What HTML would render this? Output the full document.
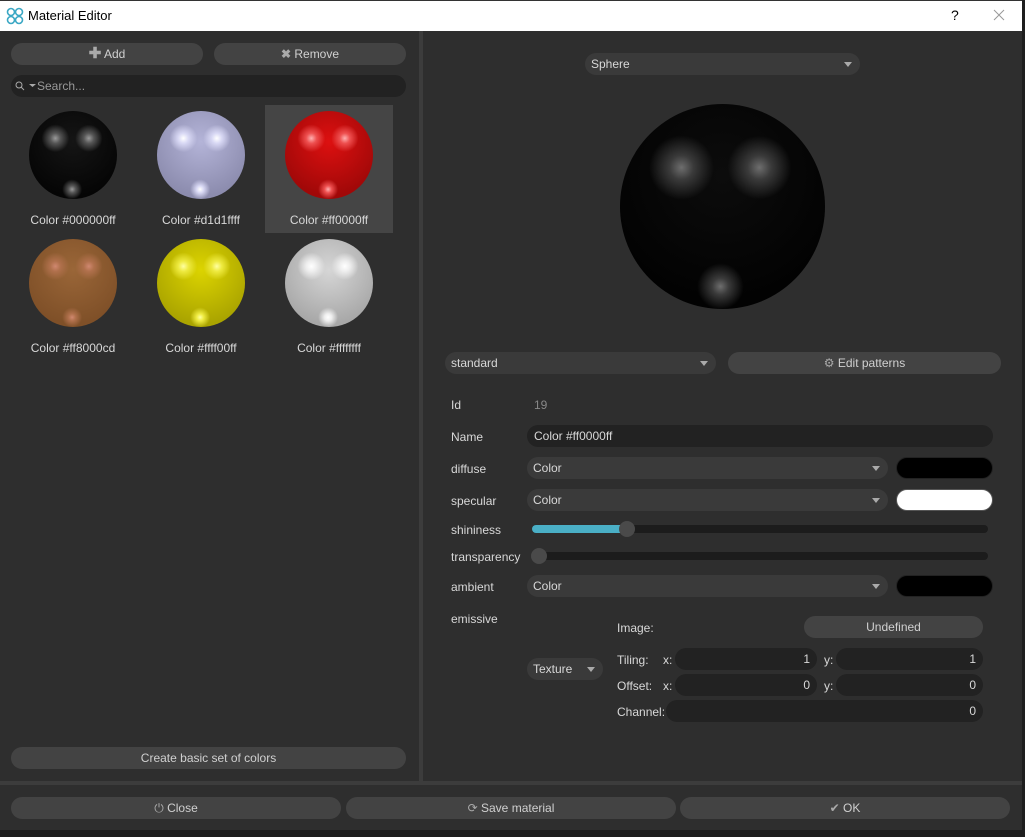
<!DOCTYPE html>
<html><head><meta charset="utf-8"><style>
*{box-sizing:border-box;margin:0;padding:0}
body{width:1025px;height:837px;overflow:hidden;background:#2e2e2e;font-family:"Liberation Sans",sans-serif;font-size:12px;color:#d8d8d8;position:relative}
.a{position:absolute}
.btn{position:absolute;background:#434343;border-radius:11px;height:22px;line-height:22px;text-align:center;color:#d0d0d0}
.fld{position:absolute;background:#222;border-radius:11px;height:22px;line-height:22px;color:#d8d8d8;padding:0 7px}
.cmb{position:absolute;background:#3a3a3a;border-radius:11px;height:22px;line-height:22px;padding-left:6px;color:#d8d8d8}
.cmb:after{content:"";position:absolute;right:8px;top:9px;border:4px solid transparent;border-top:5px solid #aaa;border-bottom:0}
.sph{position:absolute;border-radius:50%;background:
radial-gradient(circle at 30% 31%,var(--h) 0,var(--hm) 6%,transparent 16%),
radial-gradient(circle at 68% 31%,var(--h) 0,var(--hm) 6%,transparent 16%),
radial-gradient(circle at 49% 89%,var(--h) 0,var(--hm) 4%,transparent 11%),
radial-gradient(circle at 50% 35%,var(--c1),var(--c2) 75%)}
.lbl{position:absolute;width:128px;text-align:center;color:#d8d8d8}
.sw{position:absolute;border-radius:11px;height:22px;width:97px;border:1px solid #555}
</style></head><body>
<div class="a" style="left:0;top:0;width:1022px;height:31px;background:#fff;border-top:1px solid #333"></div>
<svg class="a" style="left:6px;top:7px" width="18" height="18" viewBox="0 0 18 18"><g fill="none" stroke="#3aa7c4" stroke-width="1.6"><circle cx="5" cy="5" r="3.5"/><circle cx="13" cy="5" r="3.5"/><circle cx="5" cy="13" r="3.5"/><circle cx="13" cy="13" r="3.5"/></g></svg>
<div class="a" style="left:28px;top:8px;color:#000;font-size:13px">Material Editor</div>
<div class="a" style="left:951px;top:7px;color:#000;font-size:14px">?</div>
<svg class="a" style="left:993px;top:9px" width="12" height="12"><path d="M1 1L11 11M11 1L1 11" stroke="#999" stroke-width="1"/></svg>
<div class="a" style="left:1022px;top:0;width:3px;height:837px;background:#1e1e1e"></div>
<div class="a" style="left:419px;top:31px;width:4px;height:750px;background:#3c3c3c"></div>
<div class="a" style="left:0;top:781px;width:1022px;height:4px;background:#3c3c3c"></div>
<div class="a" style="left:0;top:830px;width:1022px;height:7px;background:#1e1e1e"></div>
<div class="btn" style="left:11px;top:43px;width:192px"><b style="color:#aaa;font-size:15px">✚</b> Add</div>
<div class="btn" style="left:214px;top:43px;width:192px"><b style="color:#aaa">✖</b> Remove</div>
<div class="fld" style="left:11px;top:75px;width:395px;color:#999;padding-left:26px">Search...</div>
<svg class="a" style="left:15px;top:81px" width="22" height="10"><circle cx="4" cy="4" r="3" fill="none" stroke="#aaa"/><path d="M6 6L9 9" stroke="#aaa"/><path d="M14 3h7l-3.5 3z" fill="#aaa"/></svg>
<div class="a" style="left:265px;top:105px;width:128px;height:128px;background:#454545"></div>
<div class="sph" style="left:29px;top:111px;width:88px;height:88px;--h:#9a9a9a;--hm:#555;--c1:#151515;--c2:#050505"></div>
<div class="sph" style="left:157px;top:111px;width:88px;height:88px;--h:#fff;--hm:#d8d8f4;--c1:#b4b4d8;--c2:#8c8cae"></div>
<div class="sph" style="left:285px;top:111px;width:88px;height:88px;--h:#ffb0b0;--hm:#ee5050;--c1:#dd1010;--c2:#a00808"></div>
<div class="sph" style="left:29px;top:239px;width:88px;height:88px;--h:#d08870;--hm:#b0704c;--c1:#9a6638;--c2:#7f5028"></div>
<div class="sph" style="left:157px;top:239px;width:88px;height:88px;--h:#ffffa0;--hm:#eeea40;--c1:#dcd400;--c2:#aaa400"></div>
<div class="sph" style="left:285px;top:239px;width:88px;height:88px;--h:#fff;--hm:#eee;--c1:#d6d6d6;--c2:#a8a8a8"></div>
<div class="lbl" style="left:9px;top:213px">Color #000000ff</div>
<div class="lbl" style="left:137px;top:213px">Color #d1d1ffff</div>
<div class="lbl" style="left:265px;top:213px">Color #ff0000ff</div>
<div class="lbl" style="left:9px;top:341px">Color #ff8000cd</div>
<div class="lbl" style="left:137px;top:341px">Color #ffff00ff</div>
<div class="lbl" style="left:265px;top:341px">Color #ffffffff</div>
<div class="btn" style="left:11px;top:747px;width:395px">Create basic set of colors</div>
<div class="cmb" style="left:585px;top:53px;width:275px">Sphere</div>
<div class="sph" style="left:620px;top:104px;width:205px;height:205px;--h:#6e6e6e;--hm:#3a3a3a;--c1:#0c0c0c;--c2:#020202"></div>
<div class="cmb" style="left:445px;top:352px;width:271px">standard</div>
<div class="btn" style="left:728px;top:352px;width:273px"><span style="color:#aaa">⚙</span> Edit patterns</div>
<div class="a" style="left:451px;top:398px">Id</div>
<div class="a" style="left:534px;top:398px;color:#888">19</div>
<div class="a" style="left:451px;top:430px">Name</div>
<div class="fld" style="left:527px;top:425px;width:466px">Color #ff0000ff</div>
<div class="a" style="left:451px;top:462px">diffuse</div>
<div class="cmb" style="left:527px;top:457px;width:361px">Color</div>
<div class="sw" style="left:896px;top:457px;background:#000;border-color:#222"></div>
<div class="a" style="left:451px;top:494px">specular</div>
<div class="cmb" style="left:527px;top:489px;width:361px">Color</div>
<div class="sw" style="left:896px;top:489px;background:#fff"></div>
<div class="a" style="left:451px;top:523px">shininess</div>
<div class="a" style="left:532px;top:525px;width:456px;height:8px;border-radius:4px;background:#1c1c1c"></div>
<div class="a" style="left:532px;top:525px;width:95px;height:8px;border-radius:4px;background:#4aafc6"></div>
<div class="a" style="left:619px;top:521px;width:16px;height:16px;border-radius:50%;background:#4a4a4a"></div>
<div class="a" style="left:451px;top:550px">transparency</div>
<div class="a" style="left:532px;top:552px;width:456px;height:8px;border-radius:4px;background:#1c1c1c"></div>
<div class="a" style="left:531px;top:548px;width:16px;height:16px;border-radius:50%;background:#4a4a4a"></div>
<div class="a" style="left:451px;top:580px">ambient</div>
<div class="cmb" style="left:527px;top:575px;width:361px">Color</div>
<div class="sw" style="left:896px;top:575px;background:#000;border-color:#222"></div>
<div class="a" style="left:451px;top:612px">emissive</div>
<div class="a" style="left:617px;top:621px">Image:</div>
<div class="btn" style="left:804px;top:616px;width:179px">Undefined</div>
<div class="cmb" style="left:527px;top:658px;width:76px">Texture</div>
<div class="a" style="left:617px;top:653px">Tiling:</div>
<div class="a" style="left:663px;top:653px">x:</div>
<div class="fld" style="left:675px;top:648px;width:142px;text-align:right">1</div>
<div class="a" style="left:824px;top:653px">y:</div>
<div class="fld" style="left:836px;top:648px;width:147px;text-align:right">1</div>
<div class="a" style="left:617px;top:679px">Offset:</div>
<div class="a" style="left:663px;top:679px">x:</div>
<div class="fld" style="left:675px;top:674px;width:142px;text-align:right">0</div>
<div class="a" style="left:824px;top:679px">y:</div>
<div class="fld" style="left:836px;top:674px;width:147px;text-align:right">0</div>
<div class="a" style="left:617px;top:705px">Channel:</div>
<div class="fld" style="left:666px;top:700px;width:317px;text-align:right">0</div>
<div class="btn" style="left:11px;top:797px;width:330px"><span style="color:#aaa">⏻</span> Close</div>
<div class="btn" style="left:346px;top:797px;width:330px"><span style="color:#aaa">⟳</span> Save material</div>
<div class="btn" style="left:680px;top:797px;width:330px"><span style="color:#aaa">✔</span> OK</div>
</body></html>
